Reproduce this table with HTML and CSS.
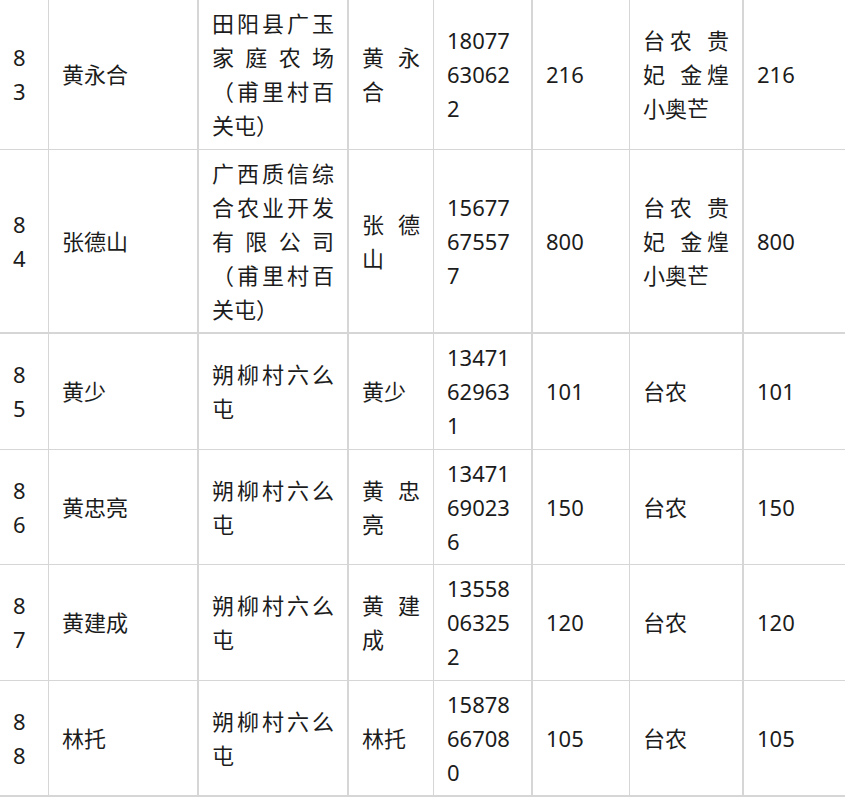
FILE: index.html
```html
<!DOCTYPE html>
<html lang="zh-CN">
<head>
<meta charset="utf-8">
<title>种植户登记表</title>
<link rel="stylesheet" href="styles.css">
</head>
<body>
<div class="sheet" role="table">
  <div class="row" role="row">
    <div class="cell c1" role="cell">83</div>
    <div class="cell c2" role="cell">黄永合</div>
    <div class="cell c3" role="cell">田阳县广玉家庭农场（甫里村百关屯）</div>
    <div class="cell c4" role="cell">黄永合</div>
    <div class="cell c5" role="cell">18077630622</div>
    <div class="cell c6" role="cell">216</div>
    <div class="cell c7" role="cell">台农 贵妃 金煌小奥芒</div>
    <div class="cell c8" role="cell">216</div>
  </div>
  <div class="row thick" role="row">
    <div class="cell c1" role="cell">84</div>
    <div class="cell c2" role="cell">张德山</div>
    <div class="cell c3" role="cell">广西质信综合农业开发有限公司（甫里村百关屯）</div>
    <div class="cell c4" role="cell">张德山</div>
    <div class="cell c5" role="cell">15677675577</div>
    <div class="cell c6" role="cell">800</div>
    <div class="cell c7" role="cell">台农 贵妃 金煌小奥芒</div>
    <div class="cell c8" role="cell">800</div>
  </div>
  <div class="row" role="row">
    <div class="cell c1" role="cell">85</div>
    <div class="cell c2" role="cell">黄少</div>
    <div class="cell c3" role="cell">朔柳村六么屯</div>
    <div class="cell c4" role="cell">黄少</div>
    <div class="cell c5" role="cell">13471629631</div>
    <div class="cell c6" role="cell">101</div>
    <div class="cell c7" role="cell">台农</div>
    <div class="cell c8" role="cell">101</div>
  </div>
  <div class="row" role="row">
    <div class="cell c1" role="cell">86</div>
    <div class="cell c2" role="cell">黄忠亮</div>
    <div class="cell c3" role="cell">朔柳村六么屯</div>
    <div class="cell c4" role="cell">黄忠亮</div>
    <div class="cell c5" role="cell">13471690236</div>
    <div class="cell c6" role="cell">150</div>
    <div class="cell c7" role="cell">台农</div>
    <div class="cell c8" role="cell">150</div>
  </div>
  <div class="row" role="row">
    <div class="cell c1" role="cell">87</div>
    <div class="cell c2" role="cell">黄建成</div>
    <div class="cell c3" role="cell">朔柳村六么屯</div>
    <div class="cell c4" role="cell">黄建成</div>
    <div class="cell c5" role="cell">13558063252</div>
    <div class="cell c6" role="cell">120</div>
    <div class="cell c7" role="cell">台农</div>
    <div class="cell c8" role="cell">120</div>
  </div>
  <div class="row thick" role="row">
    <div class="cell c1" role="cell">88</div>
    <div class="cell c2" role="cell">林托</div>
    <div class="cell c3" role="cell">朔柳村六么屯</div>
    <div class="cell c4" role="cell">林托</div>
    <div class="cell c5" role="cell">15878667080</div>
    <div class="cell c6" role="cell">105</div>
    <div class="cell c7" role="cell">台农</div>
    <div class="cell c8" role="cell">105</div>
  </div>
</div>
</body>
</html>
```

FILE: styles.css
```css
html, body {
  margin: 0;
  padding: 0;
  background: #ffffff;
  overflow: hidden;
}

.sheet {
  display: grid;
  grid-template-columns: 49px 150px 150px 85px 99px 97px 114px 110px;
  width: 854px;
  font-family: "Noto Sans", "Noto Sans CJK SC", sans-serif;
  font-size: 22px;
  line-height: 34px;
  color: #1c1c1c;
  text-spacing-trim: space-all;
}

.row {
  display: contents;
}

.cell {
  display: flex;
  flex-direction: column;
  justify-content: center;
  box-sizing: border-box;
  padding: 6px 13px 6.5px 13px;
  border-right: 1px solid #d6d6d6;
  border-bottom: 1px solid #d6d6d6;
  text-align: justify;
  word-break: break-all;
}

.row.thick .cell {
  border-bottom-width: 2px;
}

.c2, .c3, .c5, .c7 {
  border-right-width: 2px;
}
```
